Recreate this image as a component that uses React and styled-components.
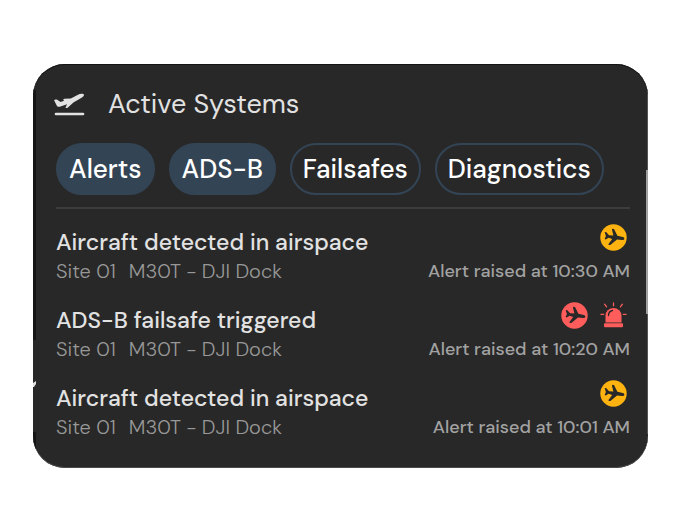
import React, { useState } from "react";
import styled, { createGlobalStyle } from "styled-components";

const GlobalStyle = createGlobalStyle`
  *, *::before, *::after { box-sizing: border-box; }
  body {
    margin: 0;
    background: #ffffff;
    font-family: "DM Sans", "Inter", "Liberation Sans", sans-serif;
  }
`;

const Page = styled.main`
  padding: 64px 33px;
`;

const Card = styled.section`
  position: relative;
  overflow: hidden;
  padding: 24px 18px 29px 23px;
  border-radius: 32px;
  background: #282828;
  box-shadow: inset 0 1px 0 #141414, inset 0 -1px 0 #4a4a4a;
`;

const EdgeArt = styled.svg`
  position: absolute;
  top: 0;
  ${({ $side }) => $side}: 0;
  width: 4px;
  height: 403px;
`;

const Header = styled.header`
  display: flex;
  align-items: center;
  gap: 22px;
  height: 32px;
  color: #e2e2e2;

  svg { margin-left: -4px; }
`;

const Heading = styled.h1`
  margin: 0;
  font-size: 27px;
  font-weight: 400;
  line-height: 32px;
`;

const Filters = styled.div`
  display: flex;
  gap: 14px;
  margin-top: 23px;
  padding-bottom: 12px;
  border-bottom: 2px solid #3c3c3c;
`;

const Chip = styled.button`
  height: 52px;
  padding: 0 11px;
  border: 2px solid #334455;
  border-radius: 26px;
  background: ${({ $active }) => ($active ? "#334455" : "transparent")};
  color: #ffffff;
  font: inherit;
  font-size: 26px;
  font-weight: 500;
  line-height: 48px;
  white-space: nowrap;
  cursor: pointer;
`;

const AlertList = styled.ul`
  display: grid;
  gap: 18px;
  margin: 0;
  padding: 14px 0 0;
  list-style: none;
`;

const AlertRow = styled.li`
  display: grid;
  grid-template-columns: 1fr auto;
  grid-template-rows: 32px 28px;
  align-items: center;
`;

const Title = styled.h2`
  margin: 0;
  padding-top: 6px;
  color: #e2e2e2;
  font-size: 23px;
  font-weight: 500;
  line-height: 26px;
`;

const Icons = styled.div`
  display: flex;
  justify-content: flex-end;
  gap: 12px;
  padding-right: 3px;
  padding-bottom: 4px;
`;

const Source = styled.p`
  display: flex;
  gap: 13px;
  margin: 0;
  padding-top: 4px;
  color: #989898;
  font-size: 20px;
  font-weight: 300;
  line-height: 24px;
`;

const Raised = styled.p`
  margin: 0;
  padding-top: 4px;
  color: #a2a2a2;
  font-size: 18px;
  font-weight: 500;
  line-height: 24px;
`;

const AMBER = "#ffb310";
const RED = "#ff5c5c";

function Plane({ color, label }) {
  return (
    <svg width="27" height="27" viewBox="0 0 27 27" role="img" aria-label={label}>
      <circle cx="13.5" cy="13.5" r="13.2" fill={color} />
      <path
        d="M4.600 8.200l1.500-.1 3 3.200 4.300.1-1.500-6 .6-.6 1.500.2 3.400 6.700 5.400 1.300c1.200.4 1.700 1.100 1.500 1.900-.2.900-1.100 1.200-2.200 1.100l-5.100-.4-6.600 5.400-1.700-.1-.2-.8 3.700-5-3.600-1.300-2.900 1.700-1.100-.4 1.300-3z"
        fill="#282828"
      />
    </svg>
  );
}

function Takeoff() {
  return (
    <svg width="34" height="28" viewBox="0 0 34 28" aria-hidden="true">
      <path
        d="M2.200 10.400c0-.8 1.900-1.200 3-.7l3.400 2.300 3.500-1.300-1-1.300 1.200-.6 6.600-.2 6.600-3.700c2-1 4.500-1.500 5.900-.8 1.300.8.5 2.300-1.400 3.400l-8.600 4.900-5.500 5.100c-.8.7-2.300.8-2.400.2l1.500-3.500-6.500 2.200c-2 .5-3.300.2-3.800-1z"
        fill="currentColor"
      />
      <path d="M4 24h27" stroke="currentColor" strokeWidth="2.600" strokeLinecap="round" />
    </svg>
  );
}

function Siren() {
  return (
    <svg width="27" height="27" viewBox="0 0 27 27" role="img" aria-label="Failsafe">
      <path d="M5.500 20.500V13.500a8 7.500 0 0 1 16 0v7z" fill={RED} />
      <rect x="4" y="21.300" width="19" height="4" rx="1" fill={RED} />
      <path d="M8.500 13.500c0-3 1.500-4.500 4-5" fill="none" stroke="#282828" strokeWidth="1.300" strokeLinecap="round" />
      <path d="M13.500 1v2.800M4.600 2.200l2 2.600M22.400 2.200l-2 2.600M1 12.400h2.600M23.400 12.400H26" fill="none" stroke={RED} strokeWidth="1.300" strokeLinecap="round" />
    </svg>
  );
}

const alerts = [
  { title: "Aircraft detected in airspace", time: "10:30 AM" },
  { title: "ADS-B failsafe triggered", time: "10:20 AM", failsafe: true },
  { title: "Aircraft detected in airspace", time: "10:01 AM" },
];

const filterNames = ["Alerts", "ADS-B", "Failsafes", "Diagnostics"];

export default function App() {
  const [active, setActive] = useState(["Alerts", "ADS-B"]);
  const toggle = (name) =>
    setActive((current) =>
      current.includes(name) ? current.filter((n) => n !== name) : [...current, name]
    );

  return (
    <Page>
      <GlobalStyle />
      <Card>
        <EdgeArt $side="left" viewBox="0 0 4 403" aria-hidden="true">
          <path d="M0 26h3v250H0zM0 368h3v16H0z" fill="#151515" />
          <path d="M0 319l3-2v3l-2 3H0z" fill="#e2e2e2" />
        </EdgeArt>
        <EdgeArt $side="right" viewBox="0 0 4 403" aria-hidden="true">
          <path d="M3 30h1v76H3zM3 250h1v120H3z" fill="#555555" />
          <path d="M2 106h2v144H2z" fill="#a0a0a0" />
        </EdgeArt>
        <Header>
          <Takeoff />
          <Heading>Active Systems</Heading>
        </Header>
        <Filters role="group" aria-label="Systems">
          {filterNames.map((name) => (
            <Chip
              key={name}
              type="button"
              $active={active.includes(name)}
              aria-pressed={active.includes(name)}
              onClick={() => toggle(name)}
            >
              {name}
            </Chip>
          ))}
        </Filters>
        <AlertList>
          {alerts.map((alert) => (
            <AlertRow key={alert.time}>
              <Title>{alert.title}</Title>
              <Icons>
                <Plane color={alert.failsafe ? RED : AMBER} label="Aircraft" />
                {alert.failsafe && <Siren />}
              </Icons>
              <Source>
                <span>Site 01</span>
                <span>M30T - DJI Dock</span>
              </Source>
              <Raised>Alert raised at {alert.time}</Raised>
            </AlertRow>
          ))}
        </AlertList>
      </Card>
    </Page>
  );
}
